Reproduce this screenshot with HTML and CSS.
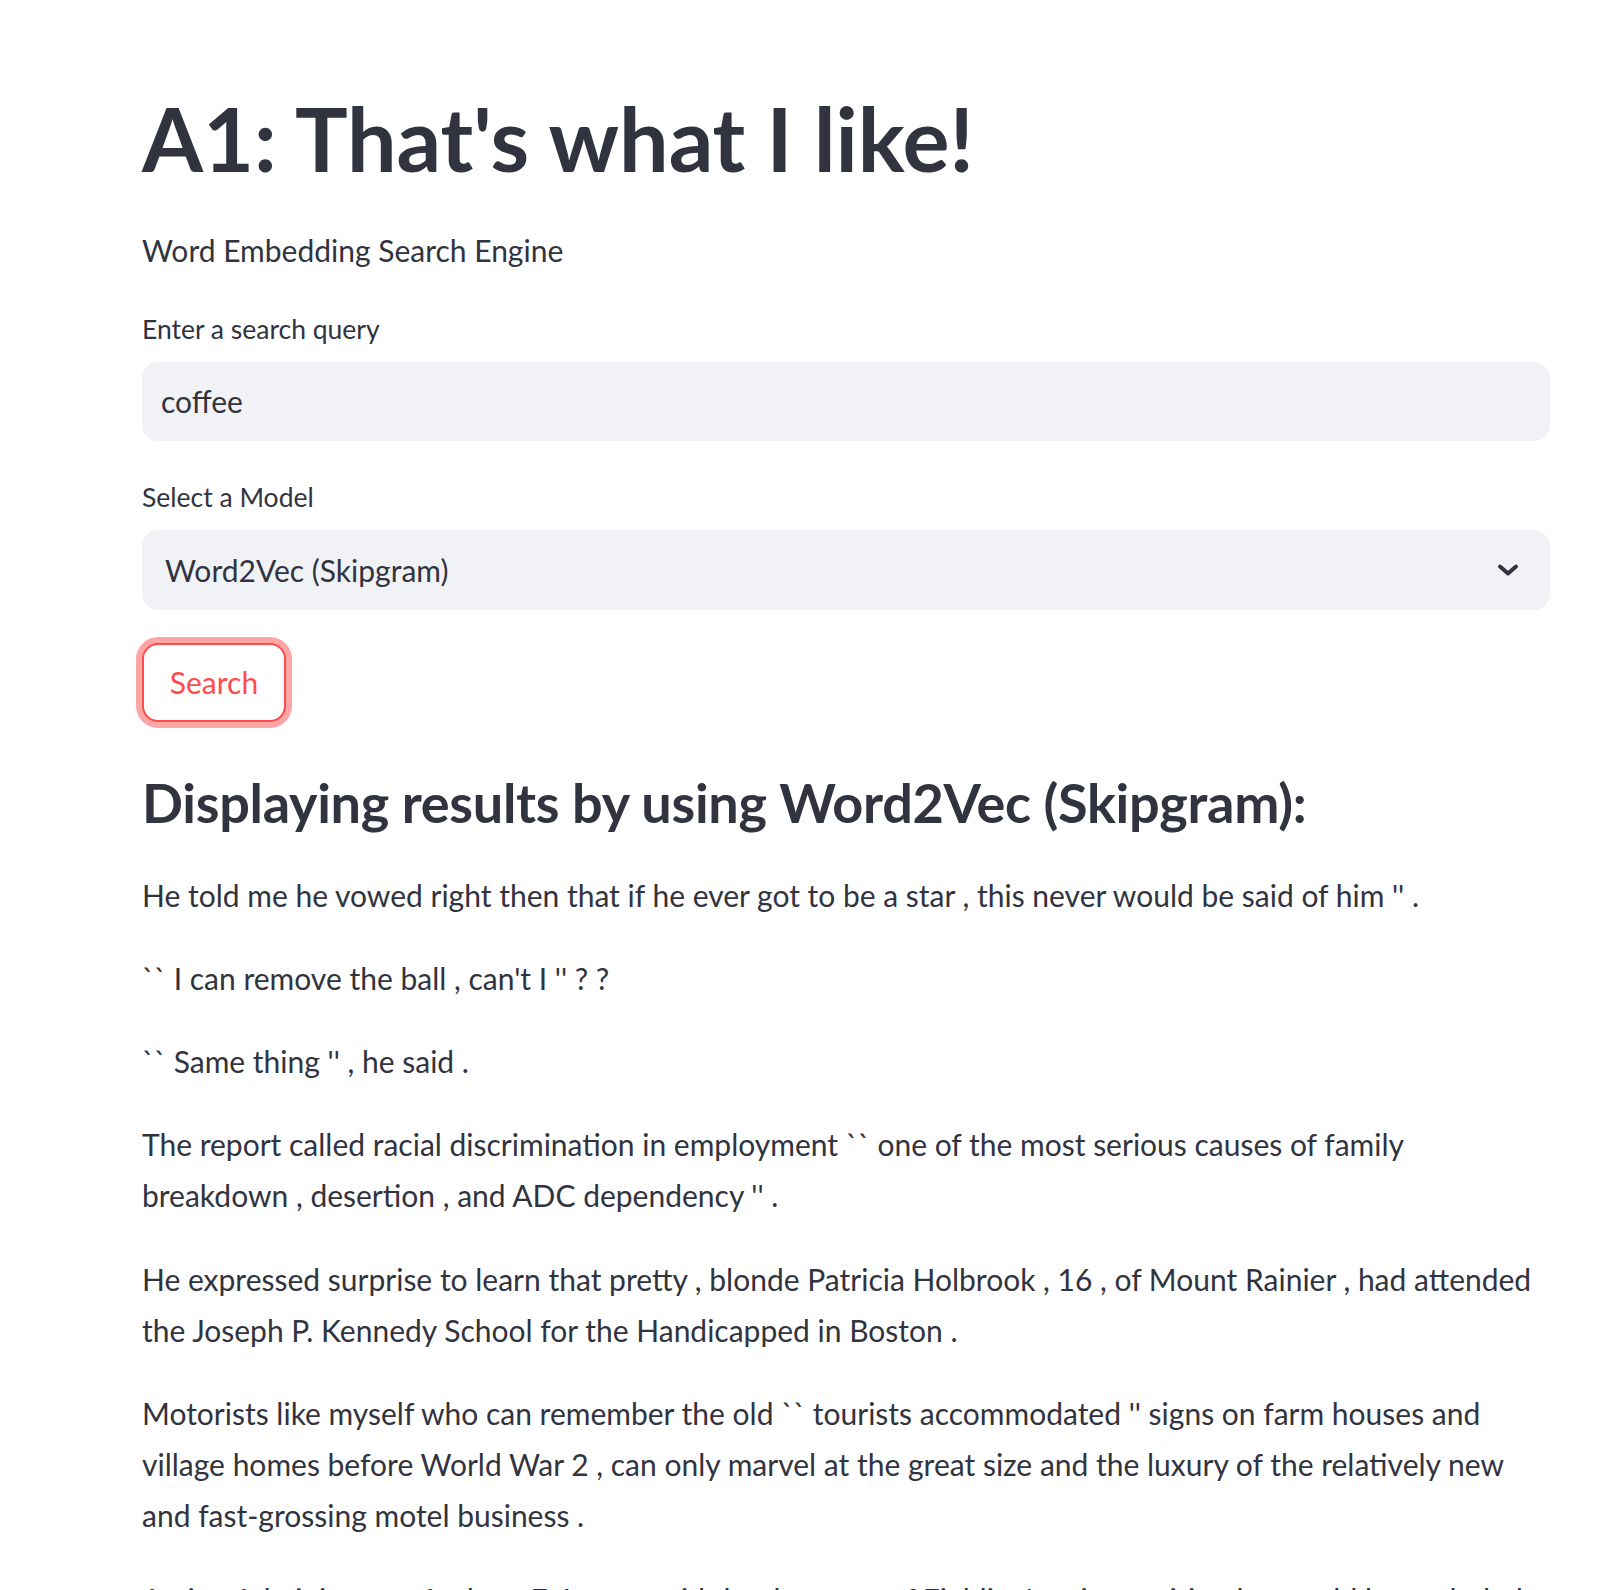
FILE: index.html
```html
<!DOCTYPE html>
<html lang="en">
<head>
<meta charset="utf-8">
<title>A1: That's what I like!</title>
<link rel="stylesheet" href="styles.css">
</head>
<body>
<main class="main">
  <h1 class="title">A1: That's what I like!</h1>
  <p class="text">Word Embedding Search Engine</p>

  <div class="field">
    <label class="label" for="q">Enter a search query</label>
    <input class="input" id="q" type="text" value="coffee">
  </div>

  <div class="field field-select">
    <div class="label">Select a Model</div>
    <div class="select">
      <span class="select-value">Word2Vec (Skipgram)</span>
      <svg class="chevron" width="22" height="14" viewBox="0 0 22 14" aria-hidden="true">
        <path d="M3 3.5 L11 10.5 L19 3.5" fill="none" stroke="#31333F" stroke-width="4" stroke-linecap="round" stroke-linejoin="round"/>
      </svg>
    </div>
  </div>

  <button class="btn" type="button">Search</button>

  <h3 class="subheader">Displaying results by using Word2Vec (Skipgram):</h3>

  <div class="results">
    <p class="text">He told me he vowed right then that if he ever got to be a star , this never would be said of him '' .</p>
    <p class="text">`` I can remove the ball , can't I '' ? ?</p>
    <p class="text">`` Same thing '' , he said .</p>
    <p class="text">The report called racial discrimination in employment `` one of the most serious causes of family breakdown , desertion , and ADC dependency '' .</p>
    <p class="text">He expressed surprise to learn that pretty , blonde Patricia Holbrook , 16 , of Mount Rainier , had attended the Joseph P. Kennedy School for the Handicapped in Boston .</p>
    <p class="text">Motorists like myself who can remember the old `` tourists accommodated '' signs on farm houses and village homes before World War 2 , can only marvel at the great size and the luxury of the relatively new and fast-grossing motel business .</p>
    <p class="text">Acting Administrator Andrew E. Lamsa said that because of Fielding's prior position he would be excluded in the appeal .</p>
  </div>
</main>
</body>
</html>
```
FILE: styles.css
```css
html, body {
  margin: 0;
  padding: 0;
  background: #ffffff;
}
body {
  font-family: Lato, "Open Sans", sans-serif;
  color: #31333F;
  overflow: hidden;
}
.main {
  width: 1408px;
  padding: 86px 54px 0 142px;
}
.title {
  font-size: 88px;
  font-weight: 700;
  line-height: 1.2;
  margin: 0 0 33px;
  letter-spacing: -0.1px;
}
.text {
  font-size: 30px;
  line-height: 51.2px;
  margin: 0 0 32px;
}
.field {
  display: flex;
  flex-direction: column;
  margin-top: 7px;
}
.field-select {
  margin-top: 35px;
}
.label {
  font-size: 26.5px;
  line-height: 42px;
  margin-bottom: 12px;
}
.input {
  box-sizing: border-box;
  height: 79px;
  width: 100%;
  border: none;
  outline: none;
  border-radius: 16px;
  background: #F0F2F6;
  padding: 0 19px;
  font-family: Lato, sans-serif;
  font-size: 30px;
  color: #31333F;
}
.select {
  box-sizing: border-box;
  height: 80px;
  border-radius: 16px;
  background: #F0F2F6;
  padding: 0 31px 0 23px;
  display: flex;
  align-items: center;
  justify-content: space-between;
  font-size: 30px;
}
.chevron {
  display: block;
}
.btn {
  display: block;
  margin-top: 33px;
  box-sizing: border-box;
  width: 144px;
  height: 79px;
  border: 2px solid #FF4B4B;
  border-radius: 16px;
  background: #ffffff;
  color: #FF4B4B;
  font-family: Lato, sans-serif;
  font-size: 30px;
  padding: 0;
  box-shadow: 0 0 0 6px rgba(255, 75, 75, 0.5);
}
.subheader {
  font-size: 54px;
  font-weight: 700;
  line-height: 1.2;
  margin: 49px 0 34px;
  letter-spacing: -0.3px;
}
```
